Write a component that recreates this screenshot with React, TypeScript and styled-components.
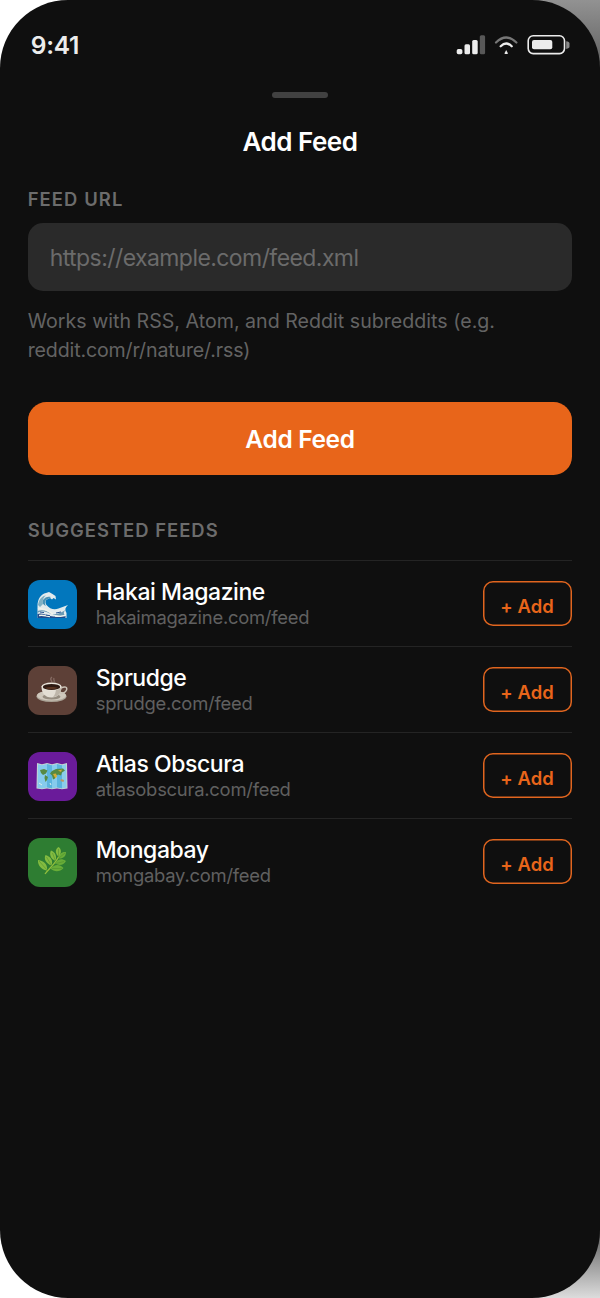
import React from 'react';
import styled, { createGlobalStyle } from 'styled-components';

const GlobalStyle = createGlobalStyle`
  *, *::before, *::after { box-sizing: border-box; }
  body {
    margin: 0;
    font-family: Inter, "Liberation Sans", sans-serif;
    background: linear-gradient(90deg, #fff 50%, transparent 50%),
      linear-gradient(180deg, #929292 0, #626262 64px, #606060 1232px, #dcdcdc 1298px);
  }
  h1, h2, p { margin: 0; }
`;

const Screen = styled.main`
  display: flex;
  flex-direction: column;
  height: 1298px;
  padding: 0 27.7px;
  overflow: hidden;
  border-radius: 68px;
  background: #0f0f0f;
  color: #fff;
`;

const StatusBar = styled.header`
  display: flex;
  justify-content: space-between;
  align-items: flex-start;
  height: 92.3px;
  padding: 30px 2.3px 0 3px;
`;

const Time = styled.time`
  font-size: 24.5px;
  font-weight: 600;
  line-height: 30px;
  letter-spacing: -0.2px;
  color: #ececec;
`;

const StatusIcons = styled.svg`
  display: block;
  margin-top: 3px;
`;

const Handle = styled.div`
  align-self: center;
  width: 56px;
  height: 6px;
  border-radius: 3px;
  background: #414141;
`;

const Title = styled.h1`
  margin-top: 28.2px;
  text-align: center;
  font-size: 26px;
  font-weight: 600;
  line-height: 32px;
  letter-spacing: -0.5px;
`;

const SectionLabel = styled.h2<{ $top: number; $tracking: number }>`
  margin-top: ${(p) => p.$top}px;
  font-size: 18.4px;
  font-weight: 600;
  line-height: 22px;
  letter-spacing: ${(p) => p.$tracking}px;
  color: #6c6c6c;
`;

const UrlInput = styled.input`
  width: 100%;
  height: 68px;
  margin-top: 12.7px;
  padding: 2px 22px 0;
  border: 0;
  border-radius: 15px;
  background: #2a2a2a;
  color: #fff;
  font: 400 23px Inter, "Liberation Sans", sans-serif;
  letter-spacing: -0.57px;
  flex-shrink: 0;
  &::placeholder { color: #6b6b6b; opacity: 1; }
`;

const Hint = styled.p`
  margin-top: 15.8px;
  font-size: 19.6px;
  line-height: 29.2px;
  color: #636363;
`;

const HintLine = styled.span<{ $tracking: number }>`
  display: block;
  white-space: nowrap;
  letter-spacing: ${(p) => p.$tracking}px;
`;

const PrimaryButton = styled.button`
  flex-shrink: 0;
  width: 100%;
  height: 73.6px;
  margin-top: 36.6px;
  padding: 0;
  border: 0;
  border-radius: 18.4px;
  background: #e8651a;
  color: #fff;
  font: 600 24.5px Inter, "Liberation Sans", sans-serif;
  letter-spacing: -0.35px;
`;

const FeedList = styled.div`
  display: flex;
  flex-direction: column;
  margin-top: 18.8px;
`;

const FeedRow = styled.div`
  display: flex;
  align-items: center;
  height: 86.15px;
  border-top: 1px solid #242424;
`;

const FeedIcon = styled.div<{ $color: string }>`
  display: grid;
  place-items: center;
  width: 49px;
  height: 49px;
  margin-top: 1px;
  border-radius: 12px;
  background: ${(p) => p.$color};
`;

const FeedText = styled.div`
  flex: 1;
  margin: 2px 0 0 19px;
`;

const FeedName = styled.div`
  font-size: 23px;
  font-weight: 500;
  line-height: 26px;
  letter-spacing: -0.44px;
`;

const FeedUrl = styled.div`
  font-size: 18.4px;
  line-height: 25px;
  letter-spacing: -0.24px;
  color: #606060;
`;

const AddButton = styled.button`
  width: 89.5px;
  height: 45px;
  padding: 4px 1px 0 0;
  border: 0;
  border-radius: 10px;
  box-shadow: inset 0 0 0 1.5px #e0651f;
  background: transparent;
  color: #e8651a;
  font: 600 18.4px Inter, "Liberation Sans", sans-serif;
  letter-spacing: 0.1px;
`;

const Wave = () => (
  <svg width="32" height="32" viewBox="0 0 32 32">
    <path d="M1.500 30V18C1.500 11 5 6 10 5l3-1 3.500 2 3 2 .5 3.500-2.500-1.500-1.500 1.500-2-1.500-2 1c-3 1-3 4-1.500 6 3 4 8 5 12 3.500l9.500-3.500c-3 2.500-3.500 5-1.500 8v5z" fill="#e3ebed" />
    <path d="M2 17c1-6 4-9 8-9.500-2 1-4 5-3 8.500l-3 3z" fill="#7fb0c4" />
    <path d="M7 12c2-3 5-4 8-3l-3 2c-3 1-4 4-2 7-3-1-4-3-3-6z" fill="#4b92b4" />
    <path d="M1.500 23c5-2 10 0 14 3 5 1 9-1 14-4-2 2-2 3-1 5-6 2-13-1-18-3-4-1-6-1-9 1z" fill="#6999b4" />
    <path d="M1.500 26c5-2 10 2 16 2.500 5 .5 8-1 12-.5v2h-28z" fill="#1d4a8c" />
    <path d="M2 21c6-2 11 3 15 5M3 27.500c5-1 7 1 11 1M19 28c4 1 7 0 10-.5" fill="none" stroke="#f2f3ea" strokeWidth="1.300" />
    <path d="M4 24l4 .5M10 27l4 .7M20 25l5-1" stroke="#23508f" />
  </svg>
);

const Coffee = () => (
  <svg width="32" height="32" viewBox="0 0 32 32">
    <ellipse cx="15.500" cy="22.300" rx="15" ry="5.800" fill="#aaa296" />
    <ellipse cx="15.500" cy="21.600" rx="14.500" ry="5" fill="#cfc8bc" />
    <ellipse cx="15.500" cy="22.800" rx="9" ry="2.800" fill="#968d80" />
    <path d="M25 14c4-2 6.500-1 5.500 2-1 2.500-4 3.500-7 3" fill="none" stroke="#cac3b7" strokeWidth="1.500" />
    <path d="M5.500 12.500c0 6 3 11 10 11s10-5 10-11z" fill="#e3ded4" />
    <path d="M20 14c0 4-1 7-3 9 6-.5 8.500-5 8.500-10z" fill="#beb6aa" />
    <ellipse cx="15.500" cy="12.500" rx="10" ry="4" fill="#ece7dd" />
    <ellipse cx="15.500" cy="12.900" rx="8.700" ry="3" fill="#2d1912" />
    <path d="M9 13.700c3 2 9 2 13 0-2-1-10-1-13 0" fill="#573321" />
    <path d="M15 9c3-2-3-3 1-6M18 8c1-2-1-2 0-4" fill="none" stroke="#a99089" strokeWidth="1.200" opacity=".55" />
  </svg>
);

const WorldMap = () => (
  <svg width="32" height="32" viewBox="0 0 32 32">
    <path d="M1 3l5 1.200 5-1.200 5 1.200 5-1.200 5 1.200 5-1.200.5 25.500-5.500.7-5-.7-5 .7-5-.7-5 .7-5.500-.7z" fill="#c5d5d3" />
    <path d="M2 4.300l4 1 5-1.200v23.500l-5 .8-4.500-.7zM16 5.300l5-1.200v23.500l-5 .8z" fill="#86cbed" />
    <path d="M11 4.100l5 1.200v23.100l-5-.8zM21 4.100l5 1.200v23.100l-5-.8z" fill="#5cb4de" />
    <path d="M26 5.300l4-1 .6 23.300-4.600.8z" fill="#8bcdea" />
    <path d="M4 10l4-1 3.500 1.500-1.500 3-3 1.500-2-2zM9 15l3 2-1 3-1.500 2-1-4zM16 11l4-2 7-.5 2 2-3 2-1 3-3-1-1 1-2-1v4l-2 1-1-4-2-2z" fill="#578a43" />
    <path d="M17 14l3-.5 1 3-1.500 2-1.500-2.500zM22 10.500l4-1-1 2.500z" fill="#d6ac37" />
    <path d="M25 19l3 1-.5 2-3-1z" fill="#bd9960" />
    <path d="M3 23l3 2M14 23l1 2" stroke="#e1efe8" />
  </svg>
);

const Herb = () => (
  <svg width="32" height="32" viewBox="0 0 32 32">
    <path d="M9 28C13 22 20 18 24 8" fill="none" stroke="#91bd3c" strokeWidth="1.300" />
    <path d="M22.500 10.500c-4-3.500-3-8 0-9.500 3 2 3.500 6 0 9.500zM19.500 15c-5-2-6.500-7-4.500-10.500 4.500 1.500 6 6 4.500 10.500zM15.500 19.500c-5.500-2-8-6.500-6-10.500 5.500 1.500 8 6 6 10.500zM11 24.500c-6-1-9.500-5.500-9-10.500 6.500 1 10 5 9 10.500z" fill="#83bb40" />
    <path d="M22.500 12.500c.5-5 3.500-7 7.500-6.500 0 4.500-3 7-7.500 6.500zM19 17.500c3-5 7-5 11-2.500-2.500 4.500-7 5-11 2.500zM14.500 22.500c4-5 9.500-4.500 13-.5-3.500 4-9 4.500-13 .5z" fill="#68ad38" />
    <path d="M3 15l8 9M10.500 11l5 8.500M16.500 7l3 8M22.500 3v8M29 7l-6 5M28 15.500l-8 2M26 22.500H16" stroke="#4b8a2d" strokeWidth=".5" />
  </svg>
);

const feeds = [
  { name: 'Hakai Magazine', url: 'hakaimagazine.com/feed', color: '#0277bd', Icon: Wave },
  { name: 'Sprudge', url: 'sprudge.com/feed', color: '#5d4037', Icon: Coffee },
  { name: 'Atlas Obscura', url: 'atlasobscura.com/feed', color: '#6a1b9a', Icon: WorldMap },
  { name: 'Mongabay', url: 'mongabay.com/feed', color: '#2e7d32', Icon: Herb },
];

export default function App() {
  return (
    <>
      <GlobalStyle />
      <Screen>
        <StatusBar>
          <Time>9:41</Time>
          <StatusIcons width="114" height="24" viewBox="456 33 114 24">
            <g fill="#ececec">
              <rect x="456.700" y="49" width="5.700" height="5.200" rx="1.700" />
              <rect x="464.500" y="44.300" width="5.500" height="9.900" rx="1.500" />
              <rect x="472.200" y="40" width="5.500" height="14.200" rx="1.500" />
              <rect x="479.800" y="35.200" width="5.300" height="19" rx="1.500" fill="#585858" />
              <path d="M506.200 50l1.800 3.500q-1.800 1-3.600 0z" />
              <rect x="532" y="40" width="20.300" height="9.200" rx="2" />
            </g>
            <path d="M496 42.500Q506.200 32.500 516.400 42.500" fill="none" stroke="#777" strokeWidth="2.200" strokeLinecap="round" />
            <path d="M500.700 46.200Q506.200 40.800 511.700 46.200" fill="none" stroke="#ececec" strokeWidth="2.300" strokeLinecap="round" />
            <rect x="528.200" y="35.800" width="36.300" height="17.800" rx="5" fill="none" stroke="#ececec" strokeWidth="1.600" />
            <path d="M566.200 41.300q3.300.3 3.300 2.300v3q0 2-3.300 2.300z" fill="#888" />
          </StatusIcons>
        </StatusBar>
        <Handle />
        <Title>Add Feed</Title>
        <SectionLabel $top={29.8} $tracking={1.1}>FEED URL</SectionLabel>
        <UrlInput placeholder="https://example.com/feed.xml" />
        <Hint>
          <HintLine $tracking={0.02}>Works with RSS, Atom, and Reddit subreddits (e.g.</HintLine>
          <HintLine $tracking={-0.15}>reddit.com/r/nature/.rss)</HintLine>
        </Hint>
        <PrimaryButton>Add Feed</PrimaryButton>
        <SectionLabel $top={43.8} $tracking={1.02}>SUGGESTED FEEDS</SectionLabel>
        <FeedList>
          {feeds.map(({ name, url, color, Icon }) => (
            <FeedRow key={name}>
              <FeedIcon $color={color}><Icon /></FeedIcon>
              <FeedText>
                <FeedName>{name}</FeedName>
                <FeedUrl>{url}</FeedUrl>
              </FeedText>
              <AddButton>+ Add</AddButton>
            </FeedRow>
          ))}
        </FeedList>
      </Screen>
    </>
  );
}
